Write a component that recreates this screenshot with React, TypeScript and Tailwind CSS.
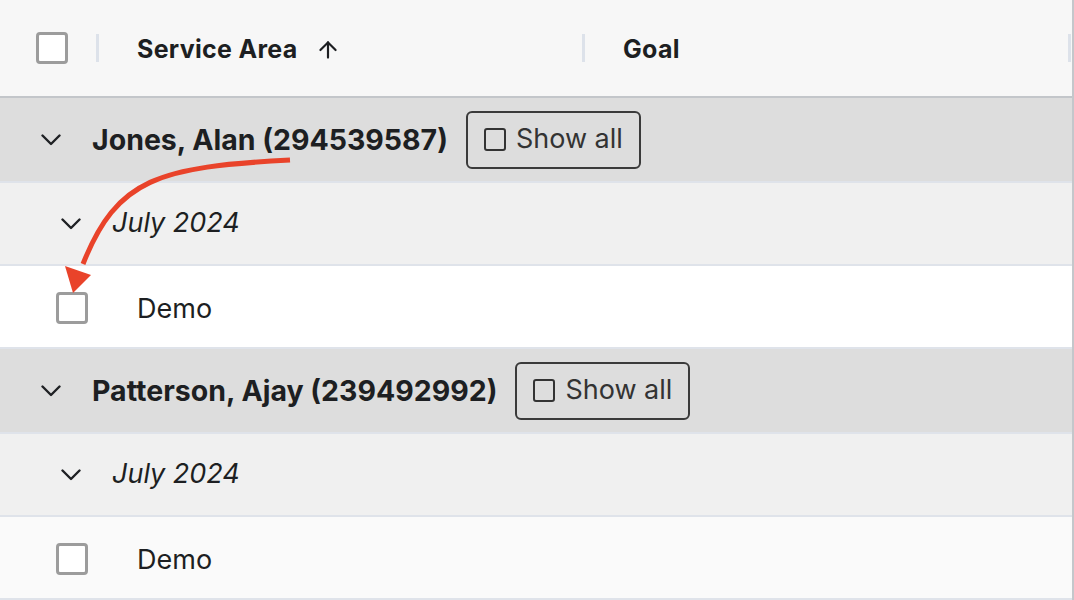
import { ArrowUp } from "lucide-react";

type Person = { name: string; month: string; items: string[] };

const people: Person[] = [
  { name: "Jones, Alan (294539587)", month: "July 2024", items: ["Demo"] },
  { name: "Patterson, Ajay (239492992)", month: "July 2024", items: ["Demo"] },
];

function Checkbox() {
  return <div className="w-[32px] h-[32px] shrink-0 rounded-[4px] border-[3px] border-[#9c9c9c] bg-white" />;
}

function Chevron() {
  return (
    <svg width="20" height="12" viewBox="0 0 20 12" fill="none" className="shrink-0">
      <polyline points="1.5,1.5 10,10 18.5,1.5" stroke="#1f2124" strokeWidth="2.4" strokeLinecap="round" strokeLinejoin="round" />
    </svg>
  );
}

function Divider() {
  return <div className="w-[3px] h-[28px] bg-[#dde2ea] shrink-0" />;
}

export default function App() {
  return (
    <div
      className="relative w-[1074px] h-[600px] overflow-hidden bg-white text-[#1d1f22] border-r-2 border-[#c4c7cb]"
      style={{ fontFamily: "Inter, 'Noto Sans', sans-serif" }}
    >
      {/* header */}
      <div className="flex items-center h-[98px] bg-[#f7f7f7] border-b-2 border-[#c3c6ca]">
        <div className="flex items-center w-[96px] shrink-0 pl-[36px]">
          <Checkbox />
        </div>
        <Divider />
        <div className="flex items-center w-[483px] pl-[38px] mt-[3px] gap-[17px] text-[25px] tracking-[0.3px] font-bold">
          <span>Service Area</span>
          <ArrowUp size={26} strokeWidth={2} />
        </div>
        <Divider />
        <div className="flex items-center w-[483px] pl-[38px] mt-[3px] text-[25px] tracking-[0.3px] font-bold">
          <span>Goal</span>
        </div>
        <Divider />
      </div>

      {people.map((p, i) => (
        <div key={p.name}>
          {/* person group row */}
          <div className="flex items-center h-[85px] bg-[#dddddd] border-b-2 border-[#dfe3ea] pl-[41px]">
            <Chevron />
            <span className="ml-[31px] mt-[2px] text-[28.5px] font-bold">{p.name}</span>
            <button className="ml-[18px] flex items-center gap-[10px] h-[58px] px-[16px] rounded-[6px] border-2 border-[#3a3a3a] text-[#333] text-[27px]">
              <span className="w-[22px] h-[23px] rounded-[3px] border-2 border-[#333]" />
              <span>Show all</span>
            </button>
          </div>

          {/* month row */}
          <div className="flex items-center h-[83px] bg-[#f0f0f0] border-b-2 border-[#dfe3ea] pl-[61px]">
            <Chevron />
            <span className="ml-[31px] text-[27px] italic">{p.month}</span>
          </div>

          {p.items.map((it) => (
            <div
              key={it}
              className={`flex items-center h-[83px] border-b-2 border-[#dfe3ea] pl-[56px] pt-[3px] ${
                i === 0 ? "bg-white" : "bg-[#fafafa]"
              }`}
            >
              <Checkbox />
              <span className="ml-[49px] mt-[3px] text-[27px]">{it}</span>
            </div>
          ))}
        </div>
      ))}

      {/* annotation arrow */}
      <svg className="absolute left-0 top-0 pointer-events-none" width="1074" height="600">
        <path d="M290 160 C 159 167, 117 178, 83 264" stroke="#e9432a" strokeWidth="5" fill="none" />
        <polygon points="65,266 91,275 73,293" fill="#e9432a" />
      </svg>
    </div>
  );
}
